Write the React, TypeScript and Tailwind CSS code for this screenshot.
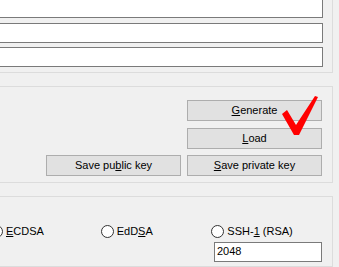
import React from "react";

function Btn({ children, className = "" }: { children: React.ReactNode; className?: string }) {
  return (
    <div
      className={`w-[135px] h-[21px] border border-[#adadad] bg-[#e1e1e1] flex items-center justify-center leading-none ${className}`}
    >
      <span>{children}</span>
    </div>
  );
}

function Radio({ children }: { children: React.ReactNode }) {
  return (
    <div className="w-[112px] flex items-center gap-[3px] h-[13px]">
      <div className="w-[13px] h-[13px] rounded-full border border-[#333333] bg-white shrink-0" />
      <span className="leading-none">{children}</span>
    </div>
  );
}

export default function App() {
  return (
    <div className="relative w-[339px] h-[267px] overflow-hidden bg-[#f0f0f0] text-[11px] text-black font-['Liberation_Sans',Arial,sans-serif]">
      <div className="flex flex-col w-[333px]">
        {/* group 1 */}
        <div className="h-[73px] border-r border-b border-[#dcdcdc] pr-[9px] flex flex-col">
          <div className="h-[18px] bg-white border-r border-b border-[#7a7a7a]" />
          <div className="mt-[5px] h-[20px] bg-white border-y border-r border-[#7a7a7a]" />
          <div className="mt-[4px] h-[20px] bg-white border-y border-r border-[#7a7a7a]" />
        </div>

        {/* group 2 */}
        <div className="mt-[13px] h-[97px] border-y border-r border-[#dcdcdc] pt-[13px] pr-[10px] flex flex-col items-end">
          <Btn>
            <span className="underline">G</span>enerate
          </Btn>
          <Btn className="mt-[7px]">
            <span className="underline">L</span>oad
          </Btn>
          <div className="mt-[6px] flex gap-[6px]">
            <Btn>
              Save pu<span className="underline">b</span>lic key
            </Btn>
            <Btn>
              <span className="underline">S</span>ave private key
            </Btn>
          </div>
        </div>

        {/* group 3 */}
        <div className="mt-[13px] h-[71px] border-y border-r border-[#dcdcdc] pt-[28px] pr-[10px] flex flex-col">
          <div className="-ml-[10px] flex items-center">
            <Radio>
              <span className="underline">E</span>CDSA
            </Radio>
            <Radio>
              EdD<span className="underline">S</span>A
            </Radio>
            <Radio>
              SSH-<span className="underline">1</span> (RSA)
            </Radio>
          </div>
          <div className="mt-[4px] ml-[214px] w-[108px] h-[20px] border border-[#7a7a7a] bg-white pl-[2px] pb-[2px] flex items-center leading-none">
            2048
          </div>
        </div>
      </div>

      <svg
        className="absolute left-[280px] top-[94px]"
        width="42"
        height="44"
        viewBox="0 0 42 44"
      >
        <polygon points="2,20 7,16 16,31 35,2 38,3 19,41 14,41" fill="#ff0000" />
      </svg>
    </div>
  );
}
